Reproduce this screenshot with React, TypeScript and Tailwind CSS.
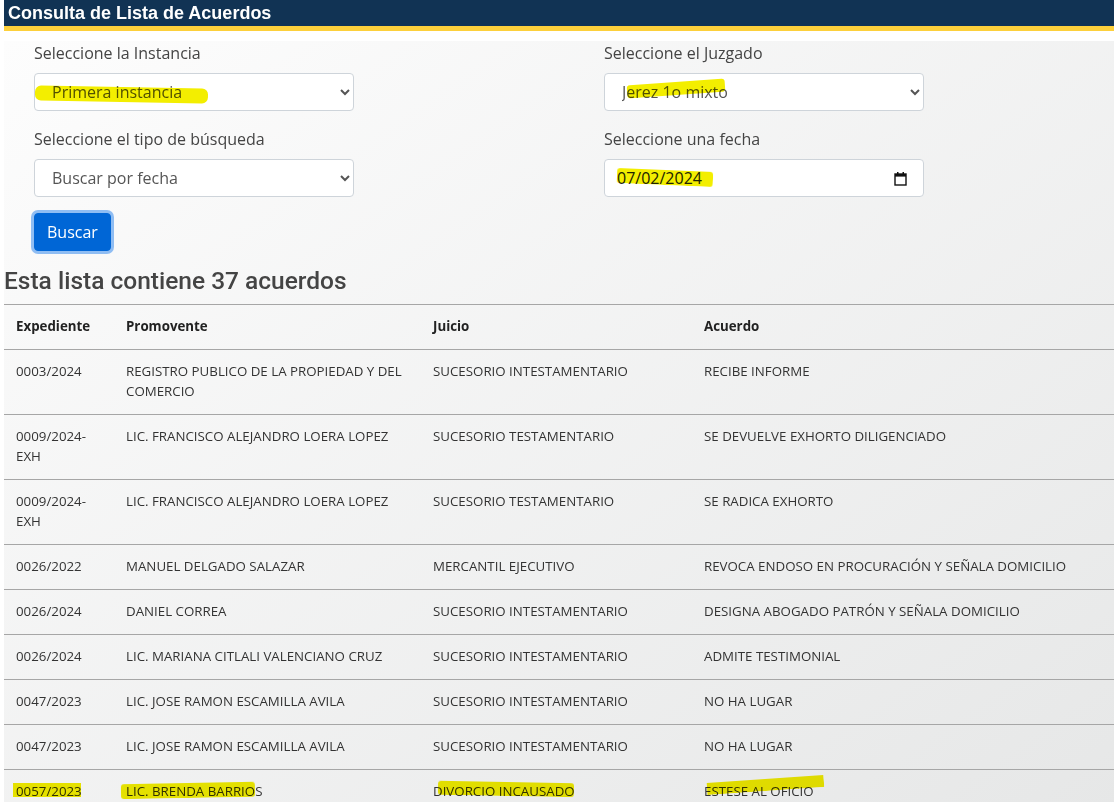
import React from "react";

type Row = { exp: string; prom: string; juicio: string; acuerdo: string };

const rows: Row[] = [
  { exp: "0003/2024", prom: "REGISTRO PUBLICO DE LA PROPIEDAD Y DEL COMERCIO", juicio: "SUCESORIO INTESTAMENTARIO", acuerdo: "RECIBE INFORME" },
  { exp: "0009/2024-EXH", prom: "LIC. FRANCISCO ALEJANDRO LOERA LOPEZ", juicio: "SUCESORIO TESTAMENTARIO", acuerdo: "SE DEVUELVE EXHORTO DILIGENCIADO" },
  { exp: "0009/2024-EXH", prom: "LIC. FRANCISCO ALEJANDRO LOERA LOPEZ", juicio: "SUCESORIO TESTAMENTARIO", acuerdo: "SE RADICA EXHORTO" },
  { exp: "0026/2022", prom: "MANUEL DELGADO SALAZAR", juicio: "MERCANTIL EJECUTIVO", acuerdo: "REVOCA ENDOSO EN PROCURACIÓN Y SEÑALA DOMICILIO" },
  { exp: "0026/2024", prom: "DANIEL CORREA", juicio: "SUCESORIO INTESTAMENTARIO", acuerdo: "DESIGNA ABOGADO PATRÓN Y SEÑALA DOMICILIO" },
  { exp: "0026/2024", prom: "LIC. MARIANA CITLALI VALENCIANO CRUZ", juicio: "SUCESORIO INTESTAMENTARIO", acuerdo: "ADMITE TESTIMONIAL" },
  { exp: "0047/2023", prom: "LIC. JOSE RAMON ESCAMILLA AVILA", juicio: "SUCESORIO INTESTAMENTARIO", acuerdo: "NO HA LUGAR" },
  { exp: "0047/2023", prom: "LIC. JOSE RAMON ESCAMILLA AVILA", juicio: "SUCESORIO INTESTAMENTARIO", acuerdo: "NO HA LUGAR" },
];

const hl = "pointer-events-none absolute bg-[#f3ee00] mix-blend-multiply";
const td = "px-3 pt-[11px] pb-[13px] align-top border-b border-[#a6a6a6]";
const selectCls =
  "h-[38px] w-[320px] rounded-[4px] border border-[#ced4da] bg-white pl-[13px] pr-2 text-[16px] text-[#555] font-['Open_Sans',sans-serif] outline-none";

function CalendarIcon() {
  return (
    <svg width="13" height="15" viewBox="0 0 13 15" className="block">
      <rect x="1" y="3" width="11" height="11" fill="none" stroke="#111" strokeWidth="1.4" />
      <rect x="1" y="3" width="11" height="2.6" fill="#111" />
      <rect x="3" y="1" width="1.5" height="2.5" fill="#111" />
      <rect x="8.5" y="1" width="1.5" height="2.5" fill="#111" />
    </svg>
  );
}

export default function App() {
  return (
    <div className="min-h-screen overflow-hidden bg-white pl-1 font-['Open_Sans',sans-serif]">
      <div className="h-[31px] border-b-[5px] border-[#fdd03b] bg-[#113354] px-1">
        <h1 className="font-['Liberation_Sans',Arial,sans-serif] text-[18px] font-bold leading-[26px] text-white">
          Consulta de Lista de Acuerdos
        </h1>
      </div>
      <div className="h-[10px]" />
      <div className="min-h-[761px] bg-linear-to-br from-[#fdfdfd] to-[#e6e7e7]">
        <div className="pl-[30px]">
          <div className="grid grid-cols-[570px_540px] gap-y-4">
            <div>
              <label className="mb-2 block text-[16px] leading-6 text-[#444]">Seleccione la Instancia</label>
              <div className="relative w-[320px]">
                <select className={selectCls} defaultValue="1">
                  <option value="1">Primera instancia</option>
                </select>
                <span className={`${hl} left-[1px] top-[14px] h-[15px] w-[173px] rotate-[1deg] rounded-[6px]`} />
              </div>
            </div>
            <div>
              <label className="mb-2 block text-[16px] leading-6 text-[#444]">Seleccione el Juzgado</label>
              <div className="relative w-[320px]">
                <select className={selectCls} defaultValue="1">
                  <option value="1">Jerez 1o mixto</option>
                </select>
                <span className={`${hl} left-[23px] top-[9px] h-[13px] w-[98px] -rotate-[4deg] rounded-[3px]`} />
              </div>
            </div>
            <div>
              <label className="mb-2 block text-[16px] leading-6 text-[#444]">Seleccione el tipo de búsqueda</label>
              <select className={selectCls} defaultValue="1">
                <option value="1">Buscar por fecha</option>
              </select>
            </div>
            <div>
              <label className="mb-2 block text-[16px] leading-6 text-[#444]">Seleccione una fecha</label>
              <div className="relative flex h-[38px] w-[320px] items-center justify-between rounded-[4px] border border-[#ced4da] bg-white pl-3 pr-4 text-[16px] text-[#212529]">
                <span>07/02/2024</span>
                <CalendarIcon />
                <span className={`${hl} left-[12px] top-[10px] h-[15px] w-[96px] rotate-[2.5deg] rounded-[3px]`} />
              </div>
            </div>
          </div>
          <button className="mt-4 h-[38px] rounded-[4px] border border-[#0066d6] bg-[#0066d6] px-3 text-[16px] leading-6 text-white shadow-[0_0_0_3px_#8fbdf3]">
            Buscar
          </button>
        </div>
        <h2 className="mt-[15px] font-['Roboto',sans-serif] text-[24.5px] font-medium leading-[29px] text-[#444]">
          Esta lista contiene 37 acuerdos
        </h2>
        <table className="mt-[9px] w-[1110px] table-fixed border-collapse text-left text-[13.3px] leading-5 text-[#333]">
          <colgroup>
            <col className="w-[110px]" />
            <col className="w-[307px]" />
            <col className="w-[271px]" />
            <col className="w-[422px]" />
          </colgroup>
          <thead>
            <tr className="border-t border-[#a6a6a6]">
              <th className={`${td} font-bold text-[#222]`}>Expediente</th>
              <th className={`${td} font-bold text-[#222]`}>Promovente</th>
              <th className={`${td} font-bold text-[#222]`}>Juicio</th>
              <th className={`${td} font-bold text-[#222]`}>Acuerdo</th>
            </tr>
          </thead>
          <tbody>
            {rows.map((r, i) => (
              <tr key={i}>
                <td className={td}>{r.exp}</td>
                <td className={td}>{r.prom}</td>
                <td className={td}>{r.juicio}</td>
                <td className={td}>{r.acuerdo}</td>
              </tr>
            ))}
            <tr>
              <td className={td}>
                <span className="relative inline-block">
                  0057/2023
                  <span className={`${hl} -left-[3px] top-[2px] h-[14px] w-[68px]`} />
                </span>
              </td>
              <td className={td}>
                <span className="relative inline-block">
                  LIC. BRENDA BARRIOS
                  <span className={`${hl} -left-[5px] top-[2px] h-[15px] w-[134px] -rotate-[1deg] rounded-[3px]`} />
                </span>
              </td>
              <td className={td}>
                <span className="relative inline-block">
                  DIVORCIO INCAUSADO
                  <span className={`${hl} left-[5px] top-[1px] h-[14px] w-[136px] rotate-[1deg] rounded-[3px]`} />
                </span>
              </td>
              <td className={td}>
                <span className="relative inline-block">
                  ESTESE AL OFICIO
                  <span className={`${hl} left-[3px] -top-[2px] h-[12px] w-[117px] -rotate-[4deg]`} />
                </span>
              </td>
            </tr>
          </tbody>
        </table>
      </div>
    </div>
  );
}
